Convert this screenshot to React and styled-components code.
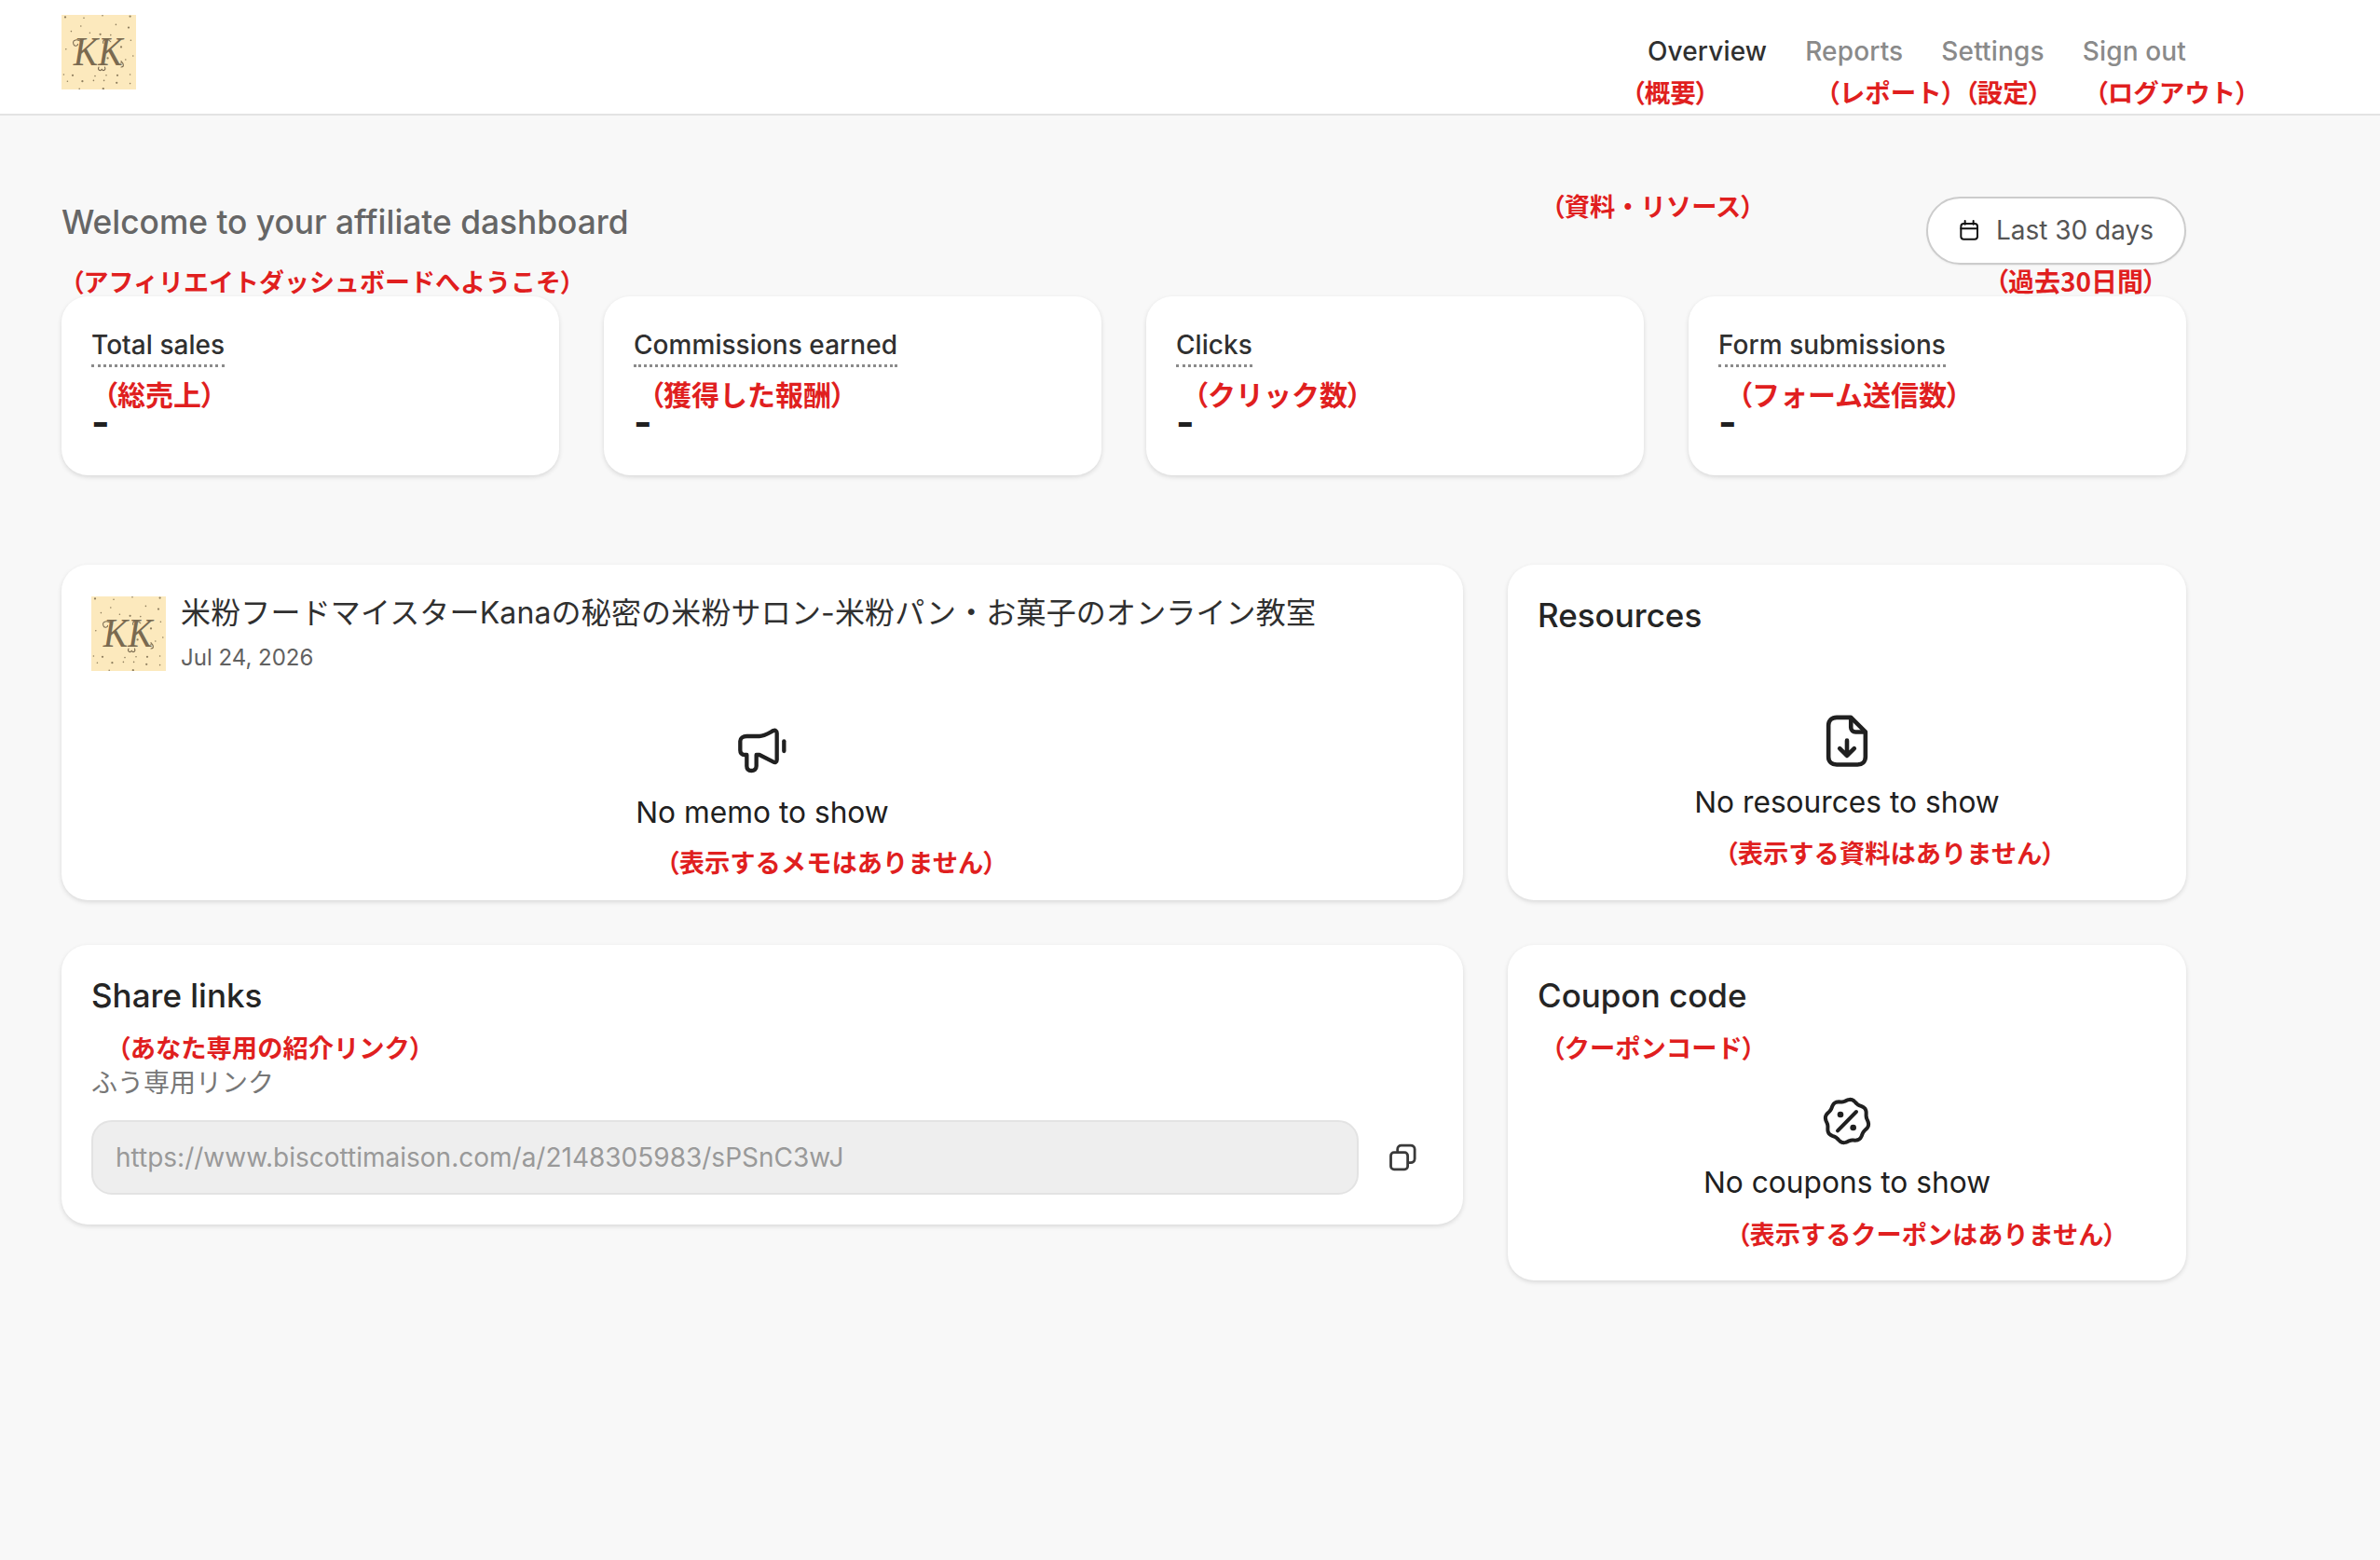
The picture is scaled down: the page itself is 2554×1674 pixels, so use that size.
import React from "react";
import styled, { createGlobalStyle } from "styled-components";

const GlobalStyle = createGlobalStyle`
  html, body {
    margin: 0;
    padding: 0;
    background: #f8f8f8;
  }
  * {
    box-sizing: border-box;
  }
`;

const SANS = `Inter, "Noto Sans CJK JP", sans-serif`;

const Page = styled.div`
  position: relative;
  min-height: 1674px;
  background: #f8f8f8;
  font-family: ${SANS};
  color: #202020;
`;

const Header = styled.header`
  height: 124px;
  padding: 16px 208px 0 66px;
  display: flex;
  justify-content: space-between;
  align-items: flex-start;
  background: #fff;
  border-bottom: 2px solid #e3e3e3;
`;

const Nav = styled.nav`
  display: flex;
  gap: 41px;
  height: 77px;
  align-items: center;
`;

const NavItem = styled.a`
  font-size: 28px;
  font-weight: 500;
  letter-spacing: 0.15px;
  color: ${(p) => (p.$active ? "#303030" : "#8a8a8a")};
`;

const Main = styled.main`
  width: 2280px;
  margin-left: 66px;
  padding-top: 87px;
`;

const TopRow = styled.div`
  display: flex;
  justify-content: space-between;
  align-items: center;
  height: 73px;
  margin-bottom: 34px;
`;

const Welcome = styled.h1`
  margin: 0 0 18px;
  font-size: 35.3px;
  font-weight: 450;
  color: #666;
`;

const DateButton = styled.button`
  width: 279px;
  height: 73px;
  display: flex;
  align-items: center;
  justify-content: center;
  gap: 18px;
  padding: 0 0 2px;
  background: #fff;
  border: 2px solid #ccc;
  border-radius: 37px;
  font-family: ${SANS};
  font-size: 28px;
  color: #555;
  box-shadow: 0 1px 2px rgba(0, 0, 0, 0.06);
`;

const Card = styled.section`
  background: #fff;
  border-radius: 28px;
  box-shadow: 0 2px 5px rgba(0, 0, 0, 0.13);
`;

const Metrics = styled.div`
  display: grid;
  grid-template-columns: repeat(4, 534px);
  gap: 48px;
  margin-bottom: 96px;
`;

const MetricCard = styled(Card)`
  height: 192px;
  padding: 34px 32px 0;
`;

const MetricLabel = styled.span`
  display: inline-block;
  height: 42px;
  font-size: 28px;
  line-height: 36px;
  font-weight: 500;
  letter-spacing: 0.05px;
  color: #303030;
  border-bottom: 3px dotted #8a8a8a;
`;

const MetricValue = styled.div`
  margin-top: 47px;
  font-size: 42px;
  line-height: 24px;
  font-weight: 700;
  color: #202020;
`;

const Columns = styled.div`
  display: grid;
  grid-template-columns: 1504px 728px;
  column-gap: 48px;
  row-gap: 48px;
  align-items: start;
`;

const MemoCard = styled(Card)`
  height: 360px;
  padding: 34px 32px 0;
`;

const MemoHead = styled.div`
  display: flex;
  gap: 16px;
`;

const MemoTitle = styled.div`
  margin-top: -5px;
  font-size: 32px;
  line-height: 46px;
  letter-spacing: 0.16px;
  color: #303030;
`;

const MemoDate = styled.div`
  margin-top: 10px;
  font-size: 24px;
  line-height: 30px;
  color: #616161;
`;

const Empty = styled.div`
  display: flex;
  flex-direction: column;
  align-items: center;
  margin-top: ${(p) => p.$top}px;
  font-size: 31.7px;
  color: #202020;
  svg {
    display: block;
    margin-bottom: ${(p) => p.$gap}px;
  }
`;

const EmptyText = styled.div`
  line-height: 40px;
`;

const SideCard = styled(Card)`
  height: 360px;
  padding: 32px 32px 0;
`;

const CardTitle = styled.h2`
  margin: 0;
  font-size: 35px;
  line-height: 44px;
  font-weight: 450;
  color: #252525;
`;

const ShareCard = styled(Card)`
  height: 300px;
  padding: 32px 32px 0;
`;

const ShareSub = styled.div`
  margin-top: 52px;
  font-size: 28px;
  line-height: 40px;
  color: #777;
`;

const LinkRow = styled.div`
  display: flex;
  align-items: center;
  gap: 32px;
  margin-top: 20px;
`;

const LinkInput = styled.div`
  width: 1360px;
  height: 80px;
  display: flex;
  align-items: center;
  padding: 0 24px;
  background: #eee;
  border: 2px solid #e3e3e3;
  border-radius: 22px;
  font-size: 28px;
  color: #999;
`;

const Note = styled.span`
  position: absolute;
  left: ${(p) => p.$left}px;
  top: ${(p) => p.$top}px;
  transform: translateY(-50%);
  font-family: "Noto Sans CJK JP", sans-serif;
  font-size: ${(p) => p.$size}px;
  line-height: 1;
  font-weight: 700;
  white-space: nowrap;
  color: #e01f1f;
  text-shadow: 0 0 2px #fff;
`;

const Paren = styled.span`
  font-feature-settings: "palt";
`;

const DOTS = [
  [5, 3], [30, 4], [55, 1], [92, 2], [26, 15], [73, 13], [90, 17], [13, 22], [38, 24], [52, 26], [66, 27],
  [93, 34], [80, 43], [6, 46], [24, 54], [62, 58], [80, 64], [3, 80], [15, 81], [45, 82], [60, 81], [75, 81],
  [92, 80], [8, 89], [28, 89], [43, 88], [57, 88], [74, 91], [92, 92], [24, 99], [56, 99], [96, 55], [86, 60],
];

const Logo = () => (
  <svg width="80" height="80" viewBox="0 0 100 100" style={{ flexShrink: 0 }}>
    <rect width="100" height="100" fill="#fce9bd" />
    {DOTS.map(([x, y], i) => (
      <circle key={i} cx={x} cy={y} r={i % 3 === 0 ? 1.4 : 1} fill="#8f7f5f" />
    ))}
    <text
      x="16"
      y="68"
      textLength="66"
      lengthAdjust="spacingAndGlyphs"
      fontFamily="'Liberation Serif', serif"
      fontStyle="italic"
      fontSize="56"
      fill="#7a6a50"
    >
      KK
    </text>
    {/* flourishes around the monogram */}
    <path
      d="M28 38C22 31 14 33 16 39C17 43 22 42 22 39M66 36C62 31 54 33 56 38M50 70C48 74 52 76 54 73C56 76 60 74 58 70M80 62C84 66 84 70 80 70"
      fill="none"
      stroke="#7a6a50"
      strokeWidth="1.3"
      strokeLinecap="round"
    />
  </svg>
);

const CalendarIcon = () => (
  <svg width="22" height="22" viewBox="128 102 62 66" fill="none" stroke="#111" strokeWidth="6" strokeLinecap="round">
    <rect x="133" y="114" width="53" height="50" rx="9" />
    <path d="M133 130H186M146 105V116M173 105V116" />
  </svg>
);

const MegaphoneIcon = () => (
  <svg width="56" height="50" viewBox="270 62 168 150" fill="none" stroke="#202020" strokeWidth="13" strokeLinecap="round" strokeLinejoin="round">
    <path d="M304 92H345C360 92 375 82 390 74C396 72 401 75 401 82V168C401 176 395 178 390 175L345 152H335V188C335 198 328 203 319 203C310 203 304 198 304 188V152H298C287 152 283 145 283 137V108C283 98 292 92 304 92Z" />
    <path d="M424 108V140" />
  </svg>
);

const FileIcon = () => (
  <svg width="48" height="56" viewBox="182 58 128 158" fill="none" stroke="#202020" strokeWidth="13" strokeLinecap="round" strokeLinejoin="round">
    <path d="M215 66H258L302 110V186C302 200 292 209 278 209H215C200 209 190 200 190 186V90C190 76 200 66 215 66Z" />
    <path d="M258 68V96C258 105 264 110 272 110H300" />
    <path d="M246 136V180M224 160L246 182L268 160" />
  </svg>
);

// wavy edge of the coupon badge
const badgePath = () => {
  const pts = [];
  for (let i = 0; i < 96; i++) {
    const a = (i / 96) * Math.PI * 2;
    const r = 67 + 3.5 * Math.cos(a * 8 - Math.PI / 2);
    pts.push(`${(246 + r * Math.cos(a)).toFixed(1)} ${(131 + r * Math.sin(a)).toFixed(1)}`);
  }
  return `M${pts.join("L")}Z`;
};

const CouponIcon = () => (
  <svg width="54" height="54" viewBox="165 50 162 162" fill="none" stroke="#202020" strokeWidth="12" strokeLinecap="round" strokeLinejoin="round">
    <path d={badgePath()} />
    <path d="M216 162L276 101" />
    <circle cx="225" cy="110" r="10" fill="#202020" stroke="none" />
    <circle cx="266" cy="152" r="10" fill="#202020" stroke="none" />
  </svg>
);

const CopyIcon = () => (
  <svg width="30" height="32" viewBox="150 138 96 96" fill="none" stroke="#3a3a3a" strokeWidth="9" strokeLinecap="round" strokeLinejoin="round">
    <rect x="158" y="169" width="58" height="58" rx="11" />
    <path d="M181 166V158C181 150 187 145 194 145H226C234 145 240 150 240 158V191C240 198 234 204 226 204H218" />
  </svg>
);

const NOTES = [
  ["概要", 1751, 99, 27.5],
  ["レポート", 1960, 99, 27.5],
  ["設定", 2108, 99, 27.5],
  ["ログアウト", 2248, 99, 27.5],
  ["資料・リソース", 1665, 221, 27.3],
  ["過去30日間", 2141, 301, 28],
  ["アフィリエイトダッシュボードへようこそ", 76, 301, 27],
  ["総売上", 111, 422, 30],
  ["獲得した報酬", 697, 422, 30],
  ["クリック数", 1281, 422, 30],
  ["フォーム送信数", 1865, 422, 30],
  ["表示するメモはありません", 715, 925, 27.3],
  ["表示する資料はありません", 1851, 915, 27.3],
  ["あなた専用の紹介リンク", 126, 1124, 27.3],
  ["クーポンコード", 1665, 1124, 27.3],
  ["表示するクーポンはありません", 1864, 1324, 27.2],
];

const metrics = ["Total sales", "Commissions earned", "Clicks", "Form submissions"];
const navItems = ["Overview", "Reports", "Settings", "Sign out"];

export default function App() {
  return (
    <Page>
      <GlobalStyle />
      <Header>
        <Logo />
        <Nav>
          {navItems.map((item, i) => (
            <NavItem key={item} $active={i === 0}>
              {item}
            </NavItem>
          ))}
        </Nav>
      </Header>

      <Main>
        <TopRow>
          <Welcome>Welcome to your affiliate dashboard</Welcome>
          <DateButton>
            <CalendarIcon />
            Last 30 days
          </DateButton>
        </TopRow>

        <Metrics>
          {metrics.map((label) => (
            <MetricCard key={label}>
              <MetricLabel>{label}</MetricLabel>
              <MetricValue>-</MetricValue>
            </MetricCard>
          ))}
        </Metrics>

        <Columns>
          <MemoCard>
            <MemoHead>
              <Logo />
              <div>
                <MemoTitle>米粉フードマイスターKanaの秘密の米粉サロン-米粉パン・お菓子のオンライン教室</MemoTitle>
                <MemoDate>Jul 24, 2026</MemoDate>
              </div>
            </MemoHead>
            <Empty $top={59} $gap={22}>
              <MegaphoneIcon />
              <EmptyText>No memo to show</EmptyText>
            </Empty>
          </MemoCard>

          <SideCard>
            <CardTitle>Resources</CardTitle>
            <Empty $top={85} $gap={18}>
              <FileIcon />
              <EmptyText>No resources to show</EmptyText>
            </Empty>
          </SideCard>

          <ShareCard>
            <CardTitle>Share links</CardTitle>
            <ShareSub>ふう専用リンク</ShareSub>
            <LinkRow>
              <LinkInput>https://www.biscottimaison.com/a/2148305983/sPSnC3wJ</LinkInput>
              <CopyIcon />
            </LinkRow>
          </ShareCard>

          <SideCard>
            <CardTitle>Coupon code</CardTitle>
            <Empty $top={86} $gap={19}>
              <CouponIcon />
              <EmptyText>No coupons to show</EmptyText>
            </Empty>
          </SideCard>
        </Columns>
      </Main>

      {NOTES.map(([text, left, top, size]) => (
        <Note key={text} $left={left} $top={top} $size={size}>
          <Paren>（</Paren>
          {text}
          <Paren>）</Paren>
        </Note>
      ))}
    </Page>
  );
}
